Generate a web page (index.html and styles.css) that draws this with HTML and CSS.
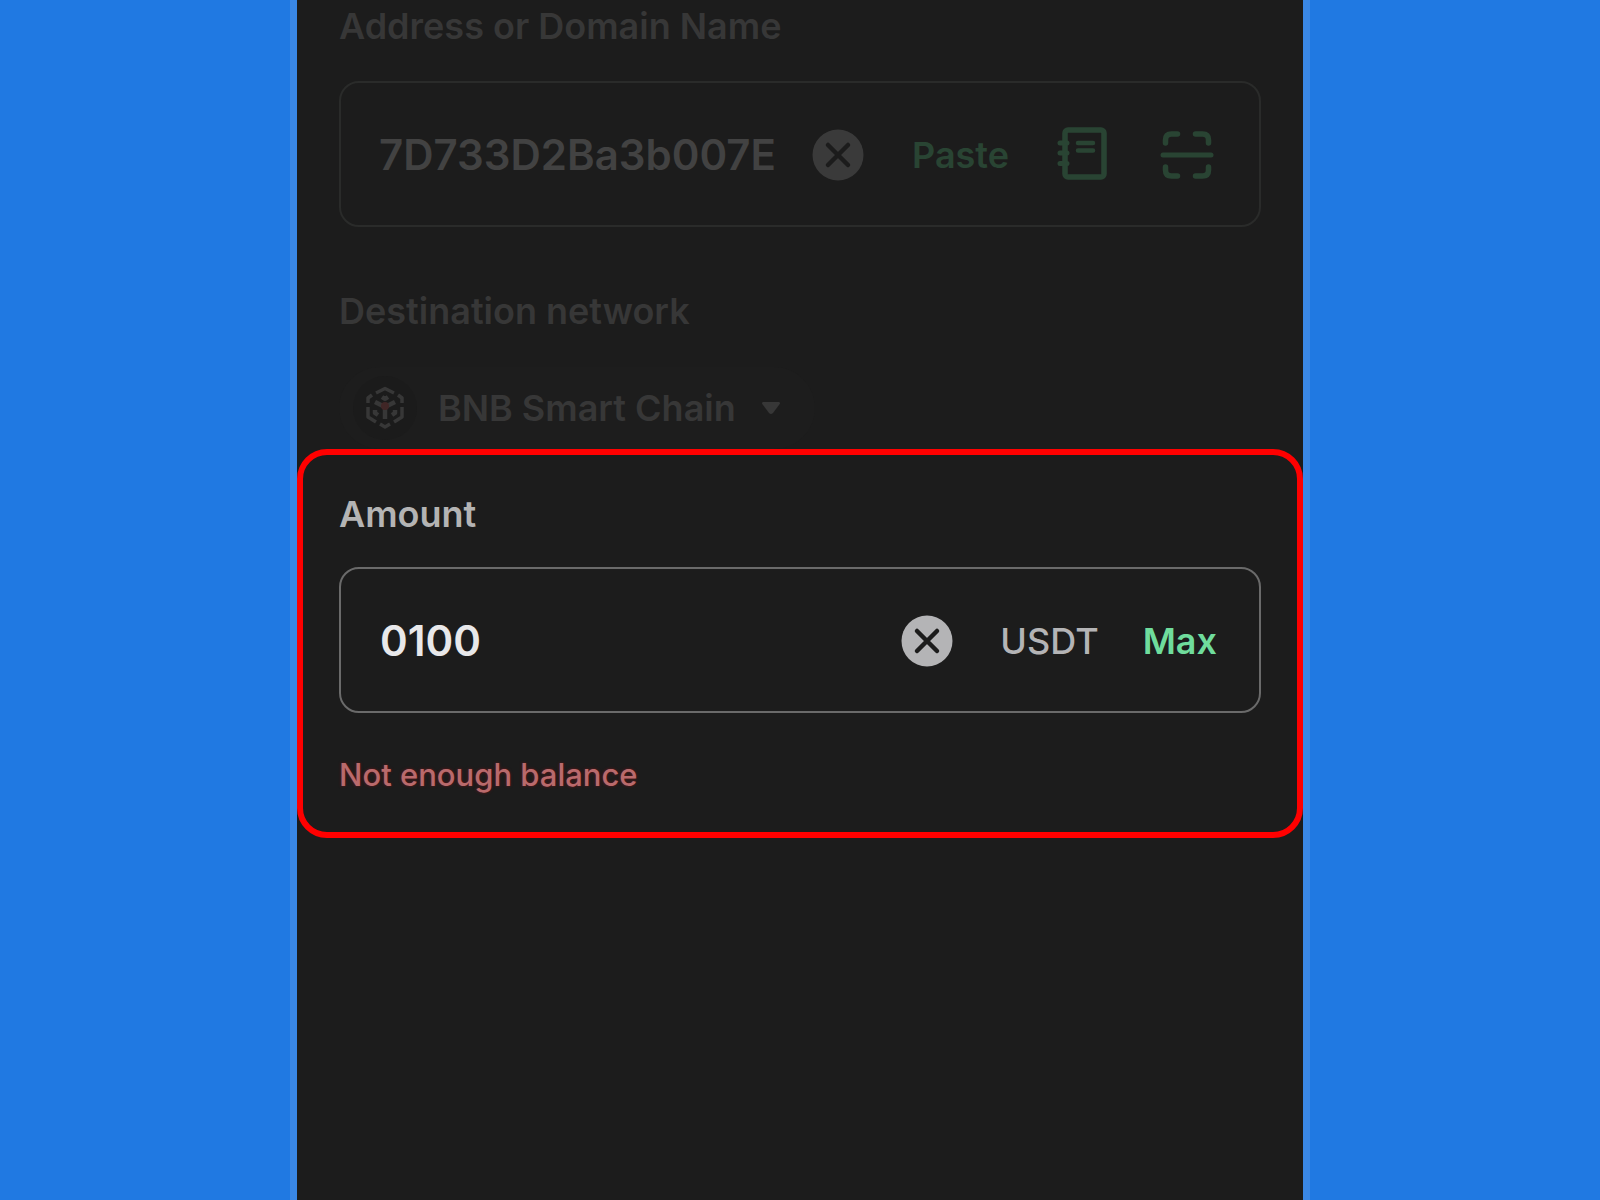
FILE: index.html
```html
<!DOCTYPE html>
<html lang="en">
<head>
<meta charset="utf-8">
<meta name="viewport" content="width=device-width, initial-scale=1">
<title>Send USDT</title>
<link rel="stylesheet" href="styles.css">
</head>
<body>
<main class="screen">
  <form class="form">
    <section class="group group-address">
      <label class="label" for="address">Address or Domain Name</label>
      <div class="field">
        <input class="value" id="address" type="text" value="7D733D2Ba3b007E">
        <div class="actions">
          <button class="icon-button" type="button" aria-label="Clear address">
            <svg class="icon" viewBox="0 0 52 52"><circle cx="26" cy="26" r="25.500" fill="currentColor"/><path d="M16 16 36 36M36 16 16 36" stroke="#1c1c1c" stroke-width="4.500" stroke-linecap="round"/></svg>
          </button>
          <button class="text-button" type="button">Paste</button>
          <button class="icon-button green" type="button" aria-label="Address book">
            <svg class="icon" viewBox="0 0 52 52" fill="none" stroke="currentColor" stroke-width="5.500" stroke-linecap="round"><rect x="8" y="1" width="39" height="47" rx="3"/><path stroke-width="5" d="M3 14H10M3 24H10M3 34.500H10"/><path stroke-width="4.500" d="M21 14H36M21 21.500H36"/></svg>
          </button>
          <button class="icon-button green" type="button" aria-label="Scan code">
            <svg class="icon icon-scan" viewBox="0 0 60 52" fill="none" stroke="currentColor" stroke-width="5.500" stroke-linecap="round"><path d="M8.500 14V11Q8.500 5 14.500 5H20.500M38.500 5H45.500Q51.500 5 51.500 11V14M8.500 38V41Q8.500 47 14.500 47H20.500M38.500 47H45.500Q51.500 47 51.500 41V38"/><path stroke-width="5" d="M6 26H54"/></svg>
          </button>
        </div>
      </div>
    </section>
    <section class="group group-network">
      <label class="label" for="network">Destination network</label>
      <div class="pill">
        <span class="coin">
          <svg class="coin-logo" viewBox="0 0 40 44" fill="none" stroke="currentColor" stroke-width="3.500" stroke-linejoin="round"><path d="M11 7 20 2.500 29 7M3 17V12L7 9M33 9 37 12V17M3 21V31L11 36M37 21V31L29 36M15 38 20 41 25 38"/><path d="M10 16 20 21 30 16M20 21V33M17 11 20 13 23 11M10 24V27L13 29M30 24V27L27 29" stroke-width="4.500"/><circle class="coin-dot" cx="20" cy="20" r="4"/></svg>
        </span>
        <select class="network" id="network"><option>BNB Smart Chain</option></select>
        <svg class="caret" viewBox="0 0 20 14"><path d="M2 1H18Q20 2 18 4L12 12Q10 14 8 12L2 4Q0 2 2 1Z" fill="currentColor"/></svg>
      </div>
    </section>
    <section class="group group-amount">
      <label class="label" for="amount">Amount</label>
      <div class="field">
        <input class="value" id="amount" type="text" inputmode="decimal" value="0100" aria-describedby="amount-error">
        <div class="actions">
          <button class="icon-button" type="button" aria-label="Clear amount">
            <svg class="icon" viewBox="0 0 52 52"><circle cx="26" cy="26" r="25.500" fill="currentColor"/><path d="M16 16 36 36M36 16 16 36" stroke="#1c1c1c" stroke-width="4.500" stroke-linecap="round"/></svg>
          </button>
          <span class="unit">USDT</span>
          <button class="text-button" type="button">Max</button>
        </div>
      </div>
      <p class="error" id="amount-error">Not enough balance</p>
    </section>
  </form>
</main>
</body>
</html>
```
FILE: styles.css
```css
* { box-sizing: border-box; }

body {
  margin: 0;
  background: #2079e2;
  font-family: Inter, "Liberation Sans", sans-serif;
  font-size: 36px;
  line-height: 44px;
  font-weight: 600;
}

button, input, select {
  margin: 0;
  padding: 0;
  border: 0;
  background: none;
  color: inherit;
  font: inherit;
}

.screen {
  max-width: 1020px;
  min-height: 100vh;
  margin: 0 auto;
  border: solid #3987e6;
  border-width: 0 7px;
  background: #1c1c1c;
}

.group {
  display: flex;
  flex-direction: column;
  align-items: flex-start;
  padding: 0 42px;
}

.group-address { padding-top: 4px; color: #424242; }
.group-network { padding-top: 62px; color: #373737; }

.label { color: #373737; }

.field {
  display: flex;
  align-items: center;
  gap: 24px;
  width: 100%;
  height: 146px;
  margin-top: 33px;
  padding: 2px 42px 0 38px;
  border: 2px solid #2a2b2a;
  border-radius: 20px;
}

.value {
  flex: 1;
  min-width: 0;
  font-size: 42px;
  line-height: 52px;
}

.actions {
  display: flex;
  align-items: center;
  gap: 48px;
}

.icon-button { display: flex; color: #3a3a3a; }
.icon { width: 52px; height: 52px; overflow: visible; }
.icon-scan { width: 60px; }
.text-button, .green { color: #294433; }
.group-address .green { color: #294433; }

.pill {
  display: flex;
  align-items: center;
  height: 82px;
  margin-top: 34px;
  padding: 0 34px 0 14px;
  border-radius: 41px;
  background: #1d1d1d;
}

.coin {
  display: flex;
  align-items: center;
  justify-content: center;
  width: 64px;
  height: 64px;
  margin-right: 21px;
  border-radius: 50%;
  background: #1b1b1b;
}

.coin-logo { width: 40px; height: 44px; }
.coin-dot { fill: #402626; stroke: none; }
.network { appearance: none; }
.caret { width: 20px; height: 14px; margin-left: 25px; }

.group-amount {
  padding: 37px 36px 36px;
  border: 6px solid #ff0000;
  border-radius: 30px;
  color: #b4b4b6;
}

.group-amount .label { color: #b4b4b4; }
.group-amount .field { margin-top: 31px; padding-left: 39px; border-color: #6a6a6a; }
.group-amount .actions { gap: 44px; }
.group-amount .value { color: #e8e8ea; }
.group-amount .icon-button { margin-right: 3px; color: #b4b4b6; }
.group-amount .text-button { color: #6fdc9c; }
.unit { font-weight: 500; }

.error {
  margin: 42px 0 1px;
  color: #b96a6c;
  font-size: 31px;
  line-height: 40px;
  font-weight: 500;
  text-shadow: 0 0 3px #6a1518;
}
```
